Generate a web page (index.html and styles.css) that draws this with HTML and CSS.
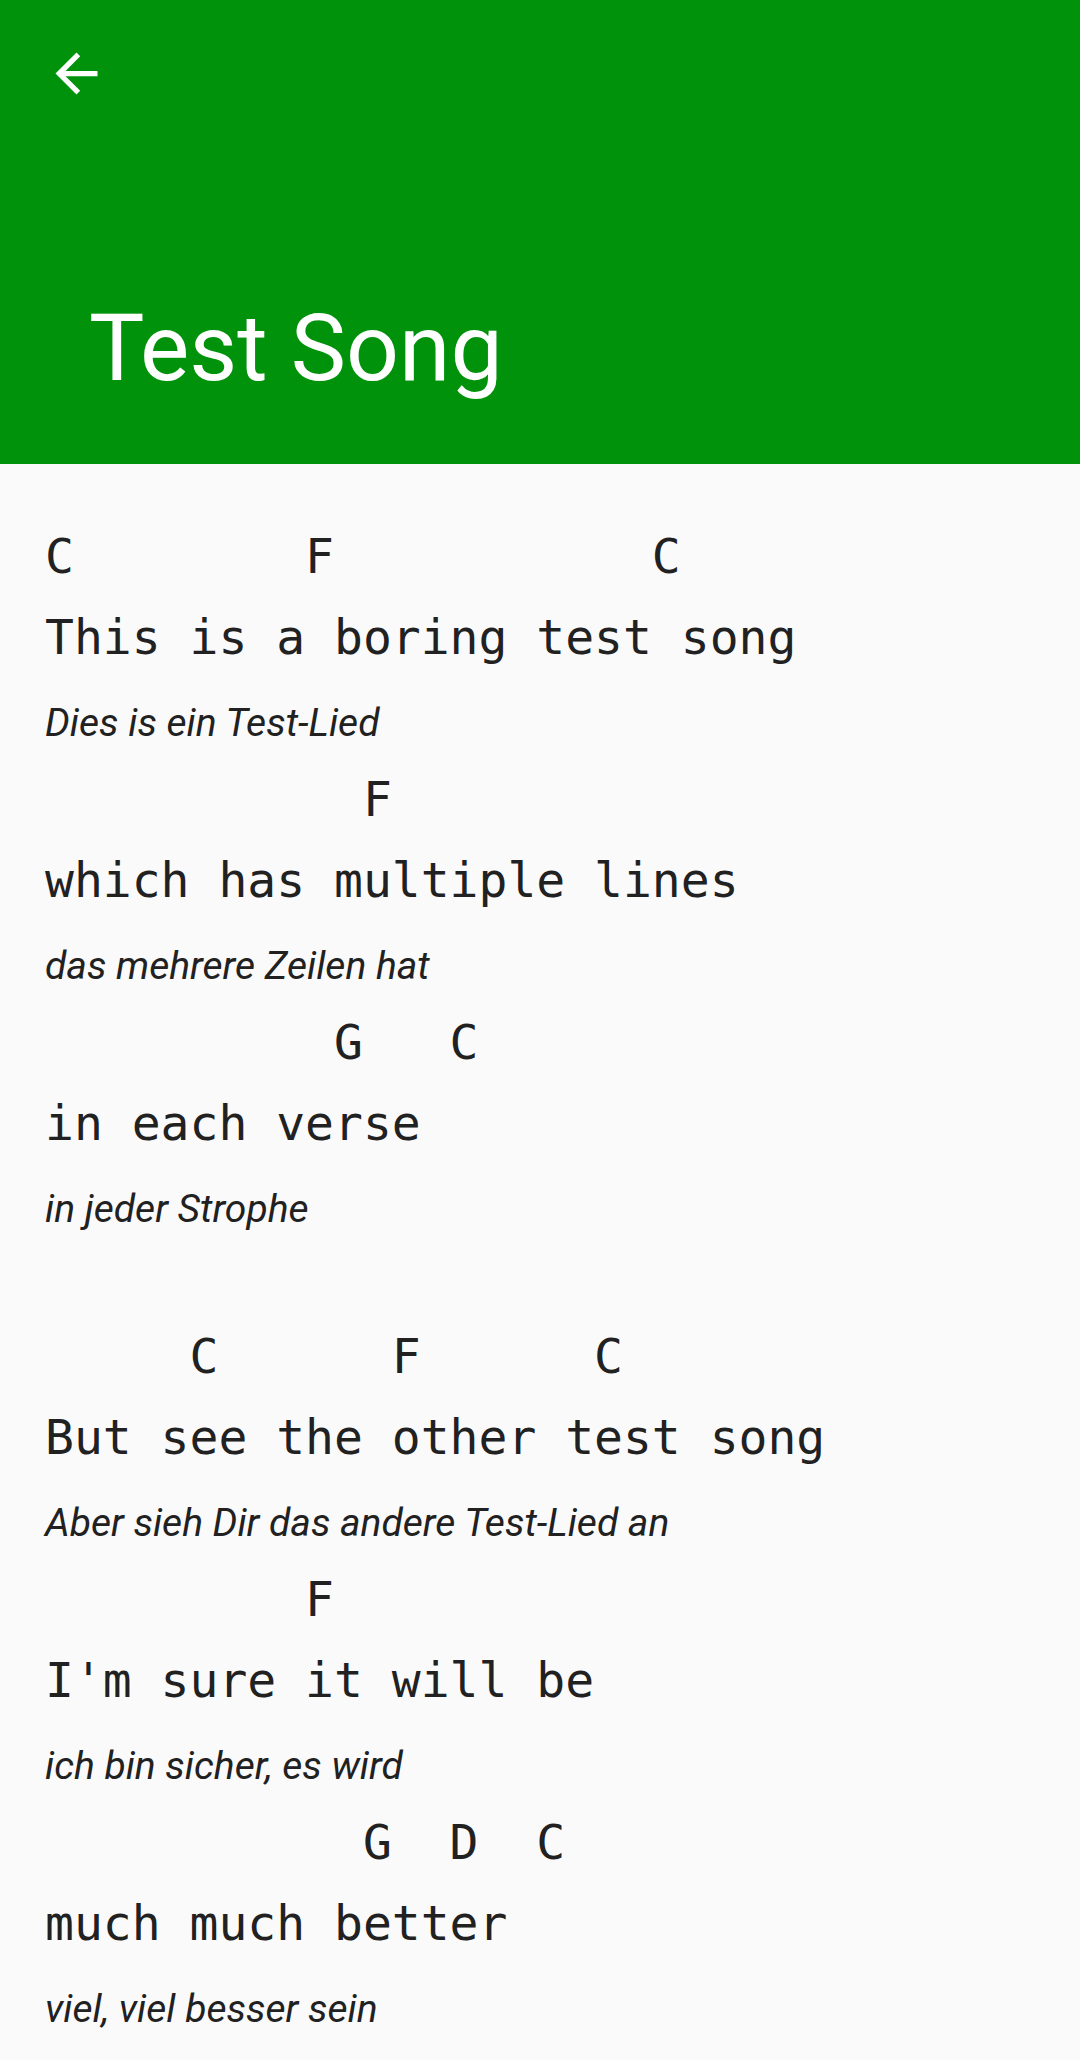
FILE: index.html
```html
<!DOCTYPE html>
<html lang="en">
<head>
<meta charset="utf-8">
<title>Test Song</title>
<link rel="stylesheet" href="styles.css">
</head>
<body>
<header class="appbar">
  <div class="toolbar">
    <button class="back" aria-label="Back">
      <svg viewBox="0 0 24 24" width="63" height="63"><path fill="#fff" d="M20 11H7.830l5.59-5.59L12 4l-8 8 8 8 1.41-1.41L7.830 13H20v-2z"/></svg>
    </button>
  </div>
  <h1 class="title">Test Song</h1>
</header>
<main class="song">
  <section class="verse">
    <div class="chord">C        F           C</div>
    <div class="lyric">This is a boring test song</div>
    <div class="trans">Dies is ein Test-Lied</div>
    <div class="chord">           F</div>
    <div class="lyric">which has multiple lines</div>
    <div class="trans">das mehrere Zeilen hat</div>
    <div class="chord">          G   C</div>
    <div class="lyric">in each verse</div>
    <div class="trans">in jeder Strophe</div>
  </section>
  <section class="verse">
    <div class="chord">     C      F      C</div>
    <div class="lyric">But see the other test song</div>
    <div class="trans">Aber sieh Dir das andere Test-Lied an</div>
    <div class="chord">         F</div>
    <div class="lyric">I'm sure it will be</div>
    <div class="trans">ich bin sicher, es wird</div>
    <div class="chord">           G  D  C</div>
    <div class="lyric">much much better</div>
    <div class="trans">viel, viel besser sein</div>
  </section>
</main>
</body>
</html>
```
FILE: styles.css
```css
html, body {
  margin: 0;
  padding: 0;
  background: #fafafa;
}
body {
  width: 1080px;
  height: 2060px;
  overflow: hidden;
  color: #212121;
  font-family: Roboto, "Noto Sans", sans-serif;
}
.appbar {
  height: 464px;
  background: #00920b;
  display: flex;
  flex-direction: column;
  justify-content: space-between;
  box-sizing: border-box;
  padding-bottom: 67px;
}
.toolbar {
  height: 147px;
  display: flex;
  align-items: center;
  padding-left: 45px;
}
.back {
  border: 0;
  background: transparent;
  padding: 0;
  width: 63px;
  height: 63px;
  display: block;
}
.back svg {
  display: block;
}
.title {
  margin: 0;
  padding-left: 89px;
  color: #fff;
  font-family: Roboto, sans-serif;
  font-weight: 400;
  font-size: 93px;
  line-height: 96px;
}
.song {
  padding: 52px 42px 0 45px;
}
.verse + .verse {
  margin-top: 71px;
}
.chord, .lyric {
  font-family: "DejaVu Sans Mono", "Liberation Mono", monospace;
  font-size: 48px;
  line-height: 81px;
  height: 81px;
  white-space: pre;
}
.trans {
  font-family: Roboto, sans-serif;
  font-style: italic;
  font-size: 39px;
  line-height: 71px;
  height: 71px;
  padding-top: 10px;
  white-space: pre;
}
```
